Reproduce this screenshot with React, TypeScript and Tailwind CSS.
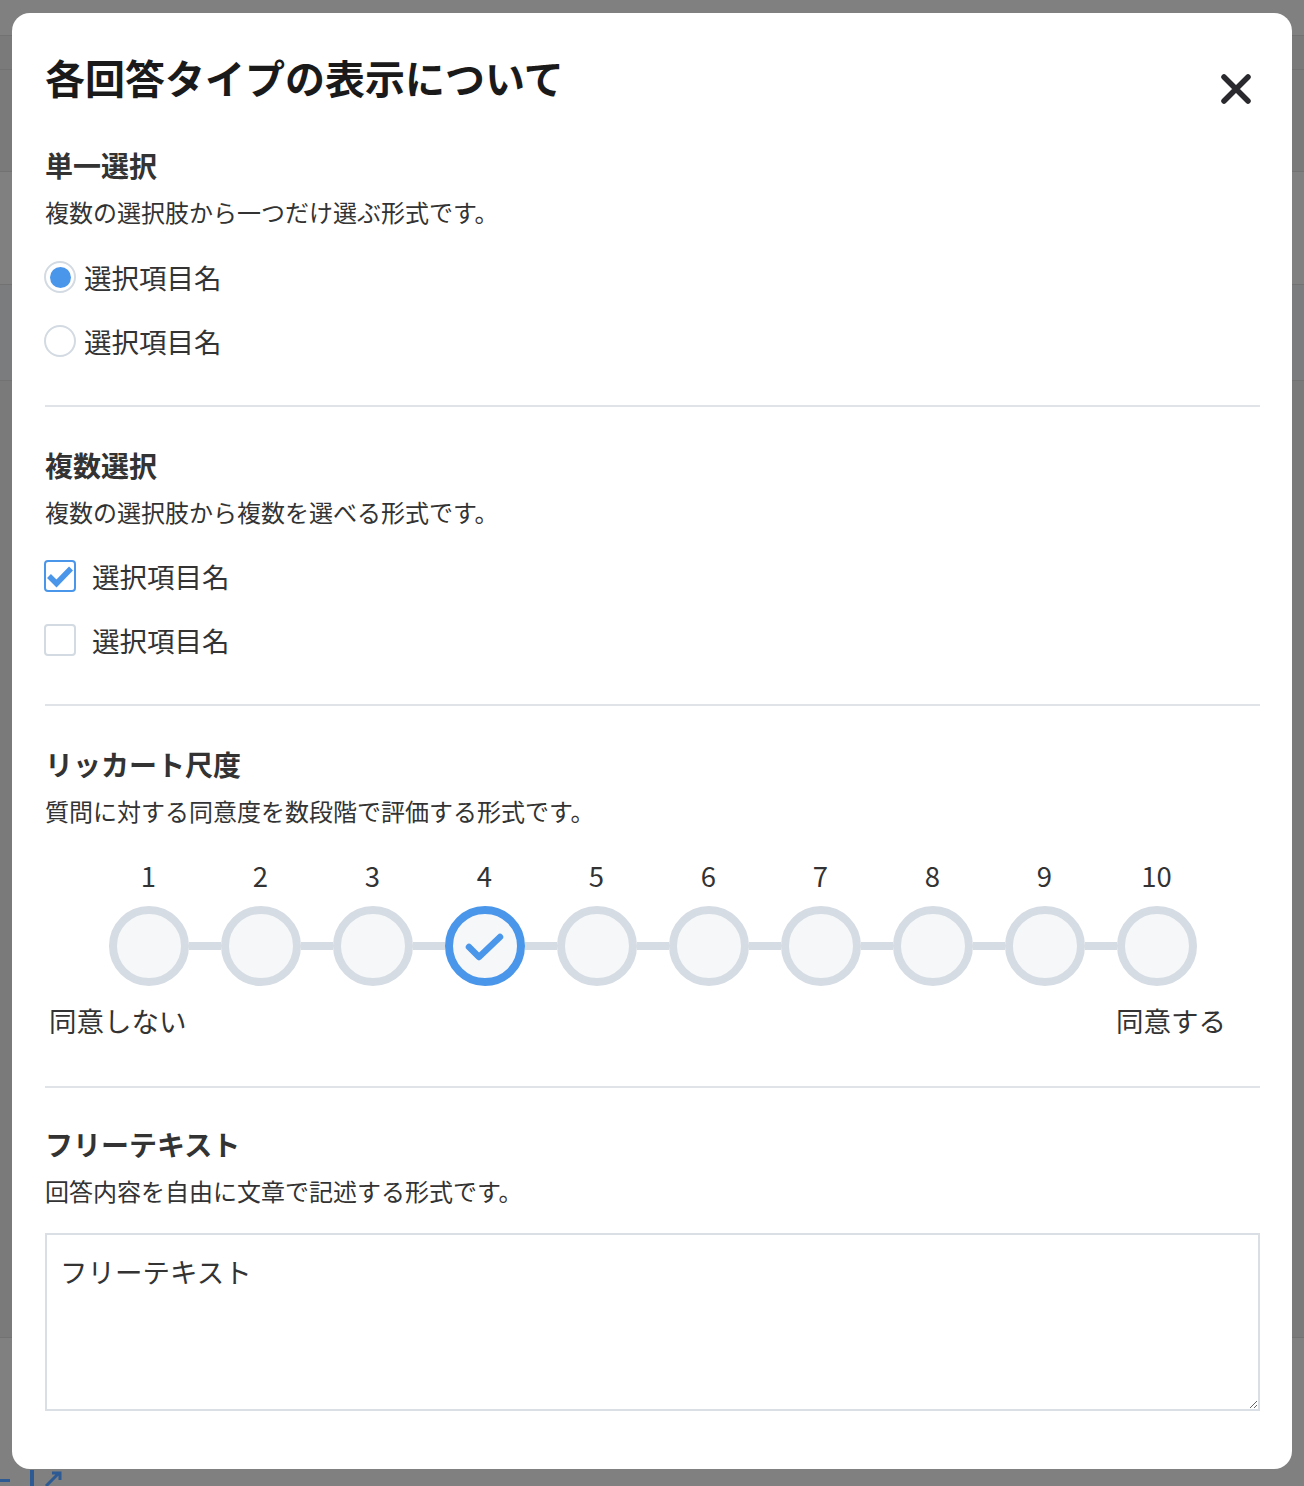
import React from "react";

const font = { fontFamily: '"Noto Sans CJK JP", "Noto Sans", sans-serif' };

function CloseIcon() {
  return (
    <svg width="32" height="32" viewBox="0 0 32 32" fill="none">
      <path d="M4 4 L28 28 M28 4 L4 28" stroke="#2a2a2e" strokeWidth="5.5" strokeLinecap="round" />
    </svg>
  );
}

function Radio({ checked, label }: { checked?: boolean; label: string }) {
  return (
    <label className="-ml-[1px] flex h-[40px] items-center gap-[8px]">
      <span className="flex h-[32px] w-[32px] items-center justify-center rounded-full border-2 border-[#d3dae2] bg-white">
        {checked && <span className="h-[21px] w-[21px] rounded-full bg-[#4a96ea]" />}
      </span>
      <span className="text-[27.5px] leading-[40px] text-[#333]">{label}</span>
    </label>
  );
}

function Checkbox({ checked, label }: { checked?: boolean; label: string }) {
  return (
    <label className="-ml-[1px] flex h-[40px] items-center gap-[16px]">
      <span
        className={
          checked
            ? "flex h-[32px] w-[32px] items-center justify-center rounded-[4px] border-2 border-[#4a96ea] bg-white"
            : "flex h-[32px] w-[32px] items-center justify-center rounded-[4px] border-2 border-[#d3dae2] bg-white"
        }
      >
        {checked && (
          <svg width="28" height="28" viewBox="0 0 28 28" fill="none">
            <path d="M3 14 L10.5 21.5 L25 6.5" stroke="#4a96ea" strokeWidth="5.5" strokeLinejoin="miter" />
          </svg>
        )}
      </span>
      <span className="text-[27.5px] leading-[40px] text-[#333]">{label}</span>
    </label>
  );
}

function Heading({ children }: { children: React.ReactNode }) {
  return <h3 className="text-[28px] font-bold leading-[40px] text-[#333]">{children}</h3>;
}

function Desc({ children }: { children: React.ReactNode }) {
  return <p className="mt-[10px] text-[24px] leading-[34px] text-[#333]">{children}</p>;
}

const scale = [1, 2, 3, 4, 5, 6, 7, 8, 9, 10];

function Likert() {
  return (
    <div className="mt-[27px]">
      <div className="flex justify-center gap-[32px]">
        {scale.map((n) => (
          <div key={n} className="w-[80px] text-center text-[27.5px] leading-[40px] text-[#333]">
            {n}
          </div>
        ))}
      </div>
      <div className="mt-[11px] flex items-center justify-center">
        {scale.map((n, i) => (
          <React.Fragment key={n}>
            {i > 0 && <div className="h-[8px] w-[32px] bg-[#d5dce3]" />}
            <div
              className={
                n === 4
                  ? "flex h-[80px] w-[80px] items-center justify-center rounded-full border-[8px] border-[#4a96ea] bg-[#f6f7f9]"
                  : "h-[80px] w-[80px] rounded-full border-[8px] border-[#d5dce3] bg-[#f6f7f9]"
              }
            >
              {n === 4 && (
                <svg width="64" height="64" viewBox="0 0 64 64" fill="none">
                  <path d="M16 33 L26 43 L47 23" stroke="#4a96ea" strokeWidth="6.5" strokeLinecap="round" strokeLinejoin="round" />
                </svg>
              )}
            </div>
          </React.Fragment>
        ))}
      </div>
      <div className="mt-[14px] flex justify-between pl-[4px] pr-[34px] text-[27.5px] leading-[40px] text-[#333]">
        <span>同意しない</span>
        <span>同意する</span>
      </div>
    </div>
  );
}

function BackgroundPage() {
  return (
    <div className="flex flex-col">
      <div className="h-[36px] border-b border-[#727272]" />
      <div className="h-[34px] border-b border-[#727272] bg-[#7a7a7a]" />
      <div className="h-[102px] border-b border-[#727272] bg-[#7a7a7a]" />
      <div className="h-[113px] border-b border-[#727272]" />
      <div className="h-[96px] border-b border-[#727272] bg-[#7b7c7e]" />
      <div className="h-[957px] border-b border-[#727272] bg-[#7a7a7a]" />
      <div className="h-[130px]" />
      <div className="flex h-[18px] items-end gap-[20px]">
        <div className="mb-[4px] h-[3px] w-[10px] bg-[#2d5a92]" />
        <div className="h-[16px] w-[4px] bg-[#2d5a92]" />
        <svg width="24" height="16" viewBox="0 0 24 16" fill="none" className="-ml-[10px]">
          <path d="M2 16 L14 4 M8 3 H16 V10" stroke="#2d5a92" strokeWidth="3" />
        </svg>
      </div>
    </div>
  );
}

export default function App() {
  return (
    <div className="relative h-[1486px] w-full overflow-hidden bg-[#808080]" style={font}>
      <BackgroundPage />
      <div className="absolute inset-0 px-[12px] pt-[13px]">
        <div className="h-[1456px] rounded-[18px] bg-white pl-[33px] pr-[32px] pt-[34px]">
          <div className="flex items-start justify-between">
            <h2 className="text-[40px] font-bold leading-[60px] text-[#1a1a1a]">各回答タイプの表示について</h2>
            <button className="mr-[8px] mt-[26px]" aria-label="閉じる">
              <CloseIcon />
            </button>
          </div>

          <section className="mt-[38px] border-b-2 border-[#e0e4e8] pb-[44px]">
            <Heading>単一選択</Heading>
            <Desc>複数の選択肢から一つだけ選ぶ形式です。</Desc>
            <div className="mt-[28px] flex flex-col gap-[24px]">
              <Radio checked label="選択項目名" />
              <Radio label="選択項目名" />
            </div>
          </section>

          <section className="mt-[38px] border-b-2 border-[#e0e4e8] pb-[44px]">
            <Heading>複数選択</Heading>
            <Desc>複数の選択肢から複数を選べる形式です。</Desc>
            <div className="mt-[27px] flex flex-col gap-[24px]">
              <Checkbox checked label="選択項目名" />
              <Checkbox label="選択項目名" />
            </div>
          </section>

          <section className="mt-[38px] border-b-2 border-[#e0e4e8] pb-[46px]">
            <Heading>リッカート尺度</Heading>
            <Desc>質問に対する同意度を数段階で評価する形式です。</Desc>
            <Likert />
          </section>

          <section className="mt-[36px]">
            <Heading>フリーテキスト</Heading>
            <Desc>回答内容を自由に文章で記述する形式です。</Desc>
            <textarea
              className="mt-[25px] block h-[178px] w-full border-2 border-[#d9dfe5] px-[13px] pt-[16px] text-[27.5px] leading-[40px] text-[#333] outline-none placeholder:text-[#333]"
              placeholder="フリーテキスト"
            />
          </section>
        </div>
      </div>
    </div>
  );
}
